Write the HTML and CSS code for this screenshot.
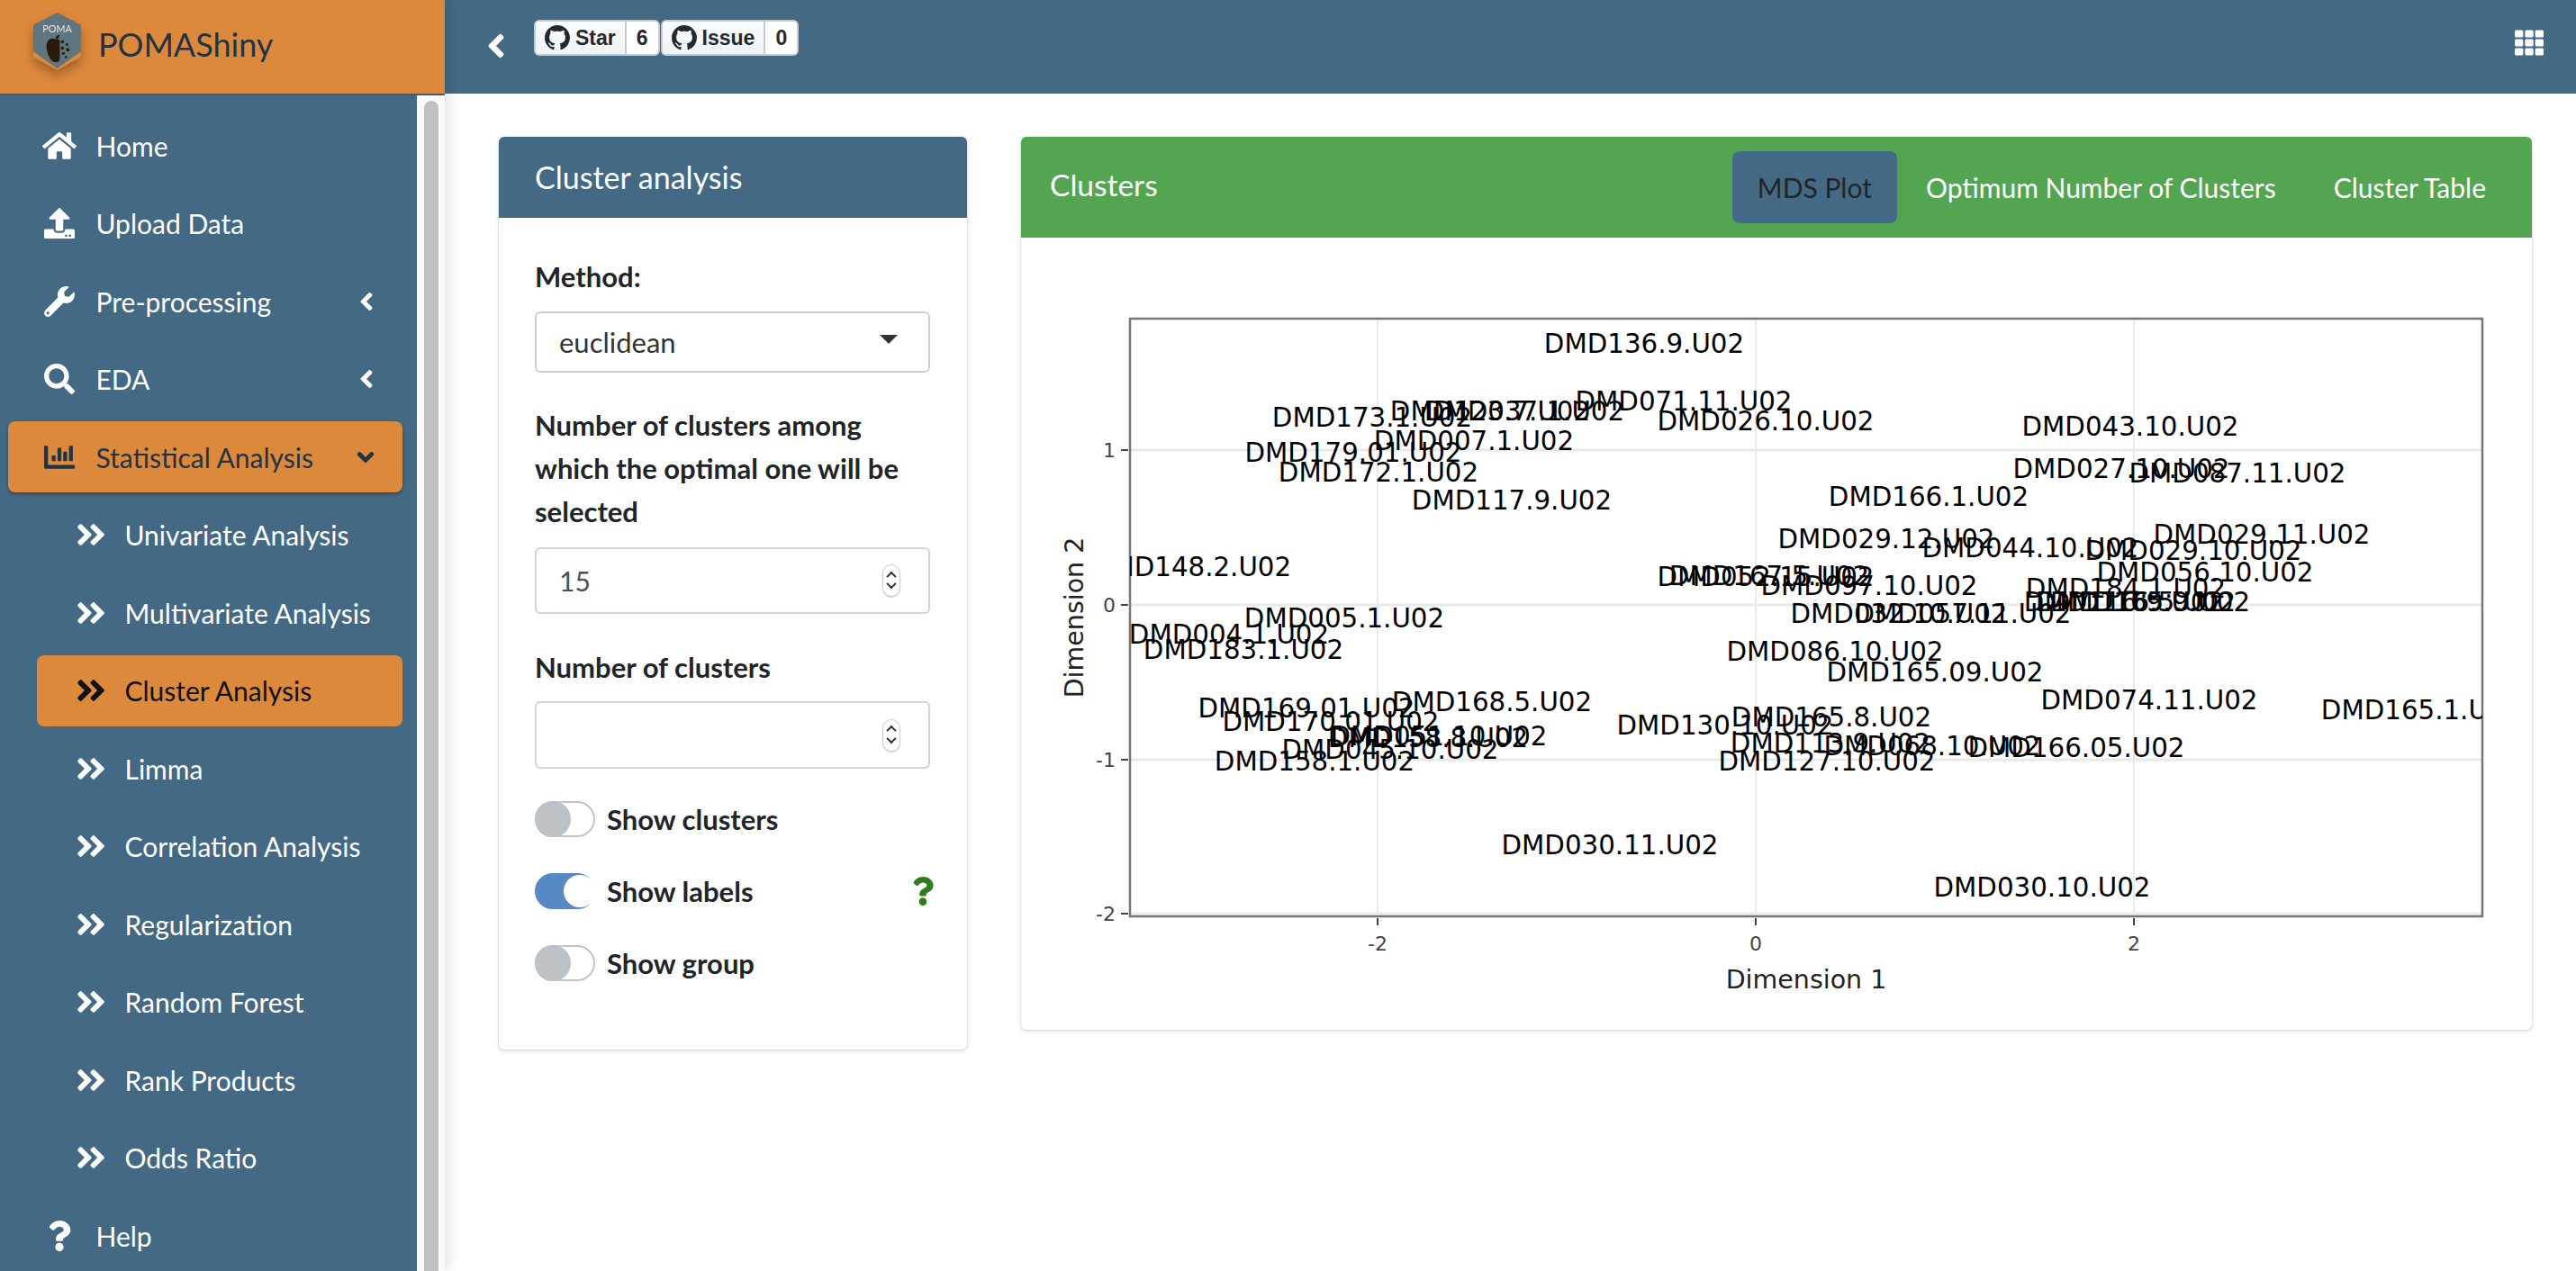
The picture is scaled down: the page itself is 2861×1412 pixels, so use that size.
FILE: index.html
```html
<!DOCTYPE html>
<html lang="en">
<head>
    <meta charset="UTF-8">
    <title>POMAShiny</title>
    <link rel="stylesheet" href="styles.css">
</head>
<body>
    <svg class="icon-defs" aria-hidden="true">
        <symbol id="i-home" viewBox="0 0 576 512"><path d="M280.37 148.26L96 300.11V464a16 16 0 0 0 16 16l112.06-.29a16 16 0 0 0 15.92-16V368a16 16 0 0 1 16-16h64a16 16 0 0 1 16 16v95.64a16 16 0 0 0 16 16.05L464 480a16 16 0 0 0 16-16V300L295.67 148.26a12.19 12.19 0 0 0-15.3 0zM571.6 251.47L488 182.56V44.05a12 12 0 0 0-12-12h-56a12 12 0 0 0-12 12v72.61L318.47 43a48 48 0 0 0-61 0L4.34 251.47a12 12 0 0 0-1.6 16.9l25.5 31A12 12 0 0 0 45.15 301l235.22-193.74a12.19 12.19 0 0 1 15.3 0L530.9 301a12 12 0 0 0 16.9-1.6l25.5-31a12 12 0 0 0-1.7-16.93z"/></symbol>
        <symbol id="i-upload" viewBox="0 0 512 512"><path d="M296 384h-80c-13.3 0-24-10.7-24-24V192h-87.7c-17.8 0-26.7-21.5-14.1-34.1L242.3 5.7c7.5-7.5 19.8-7.5 27.3 0l152.2 152.2c12.6 12.6 3.7 34.1-14.1 34.1H320v168c0 13.3-10.7 24-24 24zm216-8v112c0 13.3-10.7 24-24 24H24c-13.3 0-24-10.7-24-24V376c0-13.3 10.7-24 24-24h136v8c0 30.9 25.1 56 56 56h80c30.9 0 56-25.1 56-56v-8h136c13.3 0 24 10.7 24 24zm-124 88c0-11-9-20-20-20s-20 9-20 20 9 20 20 20 20-9 20-20zm64 0c0-11-9-20-20-20s-20 9-20 20 9 20 20 20 20-9 20-20z"/></symbol>
        <symbol id="i-wrench" viewBox="0 0 512 512"><path d="M507.73 109.1c-2.24-9.03-13.54-12.09-20.12-5.51l-74.36 74.36-67.88-11.31-11.31-67.88 74.36-74.36c6.62-6.62 3.43-17.9-5.66-20.16-47.38-11.74-99.55.91-136.58 37.93-39.64 39.64-50.55 97.1-34.05 147.2L18.74 402.76c-24.99 24.99-24.99 65.51 0 90.5 24.99 24.99 65.51 24.99 90.5 0l213.21-213.21c50.12 16.71 107.47 5.68 147.37-34.22 37.07-37.07 49.7-89.32 37.91-136.73zM64 472c-13.25 0-24-10.75-24-24 0-13.26 10.75-24 24-24s24 10.74 24 24c0 13.25-10.75 24-24 24z"/></symbol>
        <symbol id="i-search" viewBox="0 0 512 512"><path d="M505 442.7L405.3 343c-4.5-4.5-10.6-7-17-7H372c27.6-35.3 44-79.7 44-128C416 93.1 322.9 0 208 0S0 93.1 0 208s93.1 208 208 208c48.3 0 92.7-16.4 128-44v16.3c0 6.4 2.5 12.5 7 17l99.7 99.7c9.4 9.4 24.6 9.4 33.9 0l28.3-28.3c9.4-9.4 9.4-24.6.1-34zM208 336c-70.7 0-128-57.2-128-128 0-70.7 57.2-128 128-128 70.7 0 128 57.2 128 128 0 70.7-57.2 128-128 128z"/></symbol>
        <symbol id="i-chart" viewBox="0 0 512 512"><path d="M332.8 320h38.4c6.4 0 12.8-6.4 12.8-12.8V172.8c0-6.4-6.4-12.8-12.8-12.8h-38.4c-6.4 0-12.8 6.4-12.8 12.8v134.4c0 6.4 6.4 12.8 12.8 12.8zm96 0h38.4c6.4 0 12.8-6.4 12.8-12.8V76.8c0-6.4-6.4-12.8-12.8-12.8h-38.4c-6.4 0-12.8 6.4-12.8 12.8v230.4c0 6.4 6.4 12.8 12.8 12.8zm-288 0h38.4c6.4 0 12.8-6.4 12.8-12.8v-70.4c0-6.4-6.4-12.8-12.8-12.8h-38.4c-6.4 0-12.8 6.4-12.8 12.8v70.4c0 6.4 6.4 12.8 12.8 12.8zm96 0h38.4c6.4 0 12.8-6.4 12.8-12.8V108.8c0-6.4-6.4-12.8-12.8-12.8h-38.4c-6.4 0-12.8 6.4-12.8 12.8v198.4c0 6.4 6.4 12.8 12.8 12.8zM496 384H64V80c0-8.84-7.16-16-16-16H16C7.16 64 0 71.16 0 80v336c0 17.67 14.33 32 32 32h464c8.84 0 16-7.16 16-16v-32c0-8.84-7.16-16-16-16z"/></symbol>
        <symbol id="i-double" viewBox="0 0 448 512"><path d="M224.3 273l-136 136c-9.4 9.4-24.6 9.4-33.9 0l-22.6-22.6c-9.4-9.4-9.4-24.6 0-33.9l96.4-96.4-96.4-96.4c-9.4-9.4-9.4-24.6 0-33.9L54.3 103c9.4-9.4 24.6-9.4 33.9 0l136 136c9.5 9.4 9.5 24.6.1 34zm192-34l-136-136c-9.4-9.4-24.6-9.4-33.9 0l-22.6 22.6c-9.4 9.4-9.4 24.6 0 33.9l96.4 96.4-96.4 96.4c-9.4 9.4-9.4 24.6 0 33.9l22.6 22.6c9.4 9.4 24.6 9.4 33.9 0l136-136c9.4-9.2 9.4-24.4 0-33.8z"/></symbol>
        <symbol id="i-left" viewBox="0 0 256 512"><path d="M31.7 239l136-136c9.4-9.4 24.6-9.4 33.9 0l22.6 22.6c9.4 9.4 9.4 24.6 0 33.9L127.9 256l96.4 96.4c9.4 9.4 9.4 24.6 0 33.9L201.7 409c-9.4 9.4-24.6 9.4-33.9 0l-136-136c-9.5-9.4-9.5-24.6-.1-34z"/></symbol>
        <symbol id="i-down" viewBox="0 0 320 512"><path d="M143 352.3L7 216.3c-9.4-9.4-9.4-24.6 0-33.9l22.6-22.6c9.4-9.4 24.6-9.4 33.9 0l96.4 96.4 96.4-96.4c9.4-9.4 24.6-9.4 33.9 0l22.6 22.6c9.4 9.4 9.4 24.6 0 33.9l-136 136c-9.2 9.4-24.4 9.4-33.8 0z"/></symbol>
        <symbol id="i-question" viewBox="0 0 384 512"><path d="M202.021 0C122.202 0 70.503 32.703 29.914 91.026c-7.363 10.58-5.093 25.086 5.178 32.874l43.138 32.709c10.373 7.865 25.132 6.026 33.253-4.148 25.049-31.381 43.63-49.449 82.757-49.449 30.764 0 68.816 19.799 68.816 49.631 0 22.552-18.617 34.134-48.993 51.164-35.423 19.86-82.299 44.576-82.299 106.405V320c0 13.255 10.745 24 24 24h72.471c13.255 0 24-10.745 24-24v-5.773c0-42.86 125.268-44.645 125.268-160.627C377.504 66.256 286.902 0 202.021 0zM192 373.459c-38.196 0-69.271 31.075-69.271 69.271 0 38.195 31.075 69.27 69.271 69.27s69.271-31.075 69.271-69.271-31.075-69.27-69.271-69.27z"/></symbol>
        <symbol id="i-th" viewBox="0 32 512 448"><path d="M149.333 56v80c0 13.255-10.745 24-24 24H24c-13.255 0-24-10.745-24-24V56c0-13.255 10.745-24 24-24h101.333c13.255 0 24 10.745 24 24zm181.334 240v-80c0-13.255-10.745-24-24-24H205.333c-13.255 0-24 10.745-24 24v80c0 13.255 10.745 24 24 24h101.333c13.256 0 24.001-10.745 24.001-24zm32-240v80c0 13.255 10.745 24 24 24H488c13.255 0 24-10.745 24-24V56c0-13.255-10.745-24-24-24H386.667c-13.255 0-24 10.745-24 24zm-32 80V56c0-13.255-10.745-24-24-24H205.333c-13.255 0-24 10.745-24 24v80c0 13.255 10.745 24 24 24h101.333c13.256 0 24.001-10.745 24.001-24zm-205.334 56H24c-13.255 0-24 10.745-24 24v80c0 13.255 10.745 24 24 24h101.333c13.255 0 24-10.745 24-24v-80c0-13.255-10.745-24-24-24zM0 376v80c0 13.255 10.745 24 24 24h101.333c13.255 0 24-10.745 24-24v-80c0-13.255-10.745-24-24-24H24c-13.255 0-24 10.745-24 24zm386.667-56H488c13.255 0 24-10.745 24-24v-80c0-13.255-10.745-24-24-24H386.667c-13.255 0-24 10.745-24 24v80c0 13.255 10.745 24 24 24zm0 160H488c13.255 0 24-10.745 24-24v-80c0-13.255-10.745-24-24-24H386.667c-13.255 0-24 10.745-24 24v80c0 13.255 10.745 24 24 24zM181.333 376v80c0 13.255 10.745 24 24 24h101.333c13.255 0 24-10.745 24-24v-80c0-13.255-10.745-24-24-24H205.333c-13.255 0-24 10.745-24 24z"/></symbol>
        <symbol id="i-github" viewBox="0 0 16 16"><path d="M8 0C3.58 0 0 3.58 0 8c0 3.54 2.29 6.53 5.47 7.59.4.07.55-.17.55-.38 0-.19-.01-.82-.01-1.49-2.01.37-2.53-.49-2.69-.94-.09-.23-.48-.94-.82-1.13-.28-.15-.68-.52-.01-.53.63-.01 1.08.58 1.23.82.72 1.21 1.87.87 2.33.66.07-.52.28-.87.51-1.07-1.78-.2-3.64-.89-3.64-3.95 0-.87.31-1.59.82-2.15-.08-.2-.36-1.02.08-2.12 0 0 .67-.21 2.2.82.64-.18 1.32-.27 2-.27.68 0 1.36.09 2 .27 1.53-1.04 2.2-.82 2.2-.82.44 1.1.16 1.92.08 2.12.51.56.82 1.27.82 2.15 0 3.07-1.87 3.75-3.65 3.95.29.25.54.73.54 1.48 0 1.07-.01 1.93-.01 2.2 0 .21.15.46.55.38A8.013 8.013 0 0016 8c0-4.42-3.58-8-8-8z"/></symbol>
    </svg>

    <div class="wrapper">
        <aside class="sidebar">
            <div class="brand">
                <svg class="brand-logo" viewBox="0 0 56 66">
                    <polygon points="28,1 55,15 55,50 28,65 1,50 1,15" fill="#dd893b"/>
                    <polygon points="28,0 55,14 55,44 28,63 1,44 1,14" fill="#5f7680"/>
                    <text x="28" y="22" text-anchor="middle" class="logo-text">POMA</text>
                    <path d="M26 30c-6-3-11 2-10 10 1 9 6 16 10 16 3 0 5-1 5-4v-20c0-2-3-2-5-2z" fill="#2b1a0c"/>
                    <path d="M26 30c0-3 2-5 5-5-1 3-2 5-5 5z" fill="#2b1a0c"/>
                    <g fill="#2b1a0c">
                        <circle cx="34" cy="33" r="1.8"/><circle cx="39" cy="36" r="1.5"/><circle cx="34" cy="40" r="1.8"/>
                        <circle cx="40" cy="42" r="2"/><circle cx="35" cy="46" r="1.6"/><circle cx="38" cy="50" r="1.3"/>
                    </g>
                </svg>
                <span class="brand-name">POMAShiny</span>
            </div>
            <div class="sidebar-body">
                <nav class="nav">
                    <a class="nav-item"><svg class="nav-icon"><use href="#i-home"/></svg>Home</a>
                    <a class="nav-item"><svg class="nav-icon"><use href="#i-upload"/></svg>Upload Data</a>
                    <a class="nav-item"><svg class="nav-icon"><use href="#i-wrench"/></svg>Pre-processing<svg class="nav-caret"><use href="#i-left"/></svg></a>
                    <a class="nav-item"><svg class="nav-icon"><use href="#i-search"/></svg>EDA<svg class="nav-caret"><use href="#i-left"/></svg></a>
                    <a class="nav-item open"><svg class="nav-icon"><use href="#i-chart"/></svg>Statistical Analysis<svg class="nav-caret down"><use href="#i-down"/></svg></a>
                    <a class="nav-item sub"><svg class="nav-icon"><use href="#i-double"/></svg>Univariate Analysis</a>
                    <a class="nav-item sub"><svg class="nav-icon"><use href="#i-double"/></svg>Multivariate Analysis</a>
                    <a class="nav-item sub active"><svg class="nav-icon"><use href="#i-double"/></svg>Cluster Analysis</a>
                    <a class="nav-item sub"><svg class="nav-icon"><use href="#i-double"/></svg>Limma</a>
                    <a class="nav-item sub"><svg class="nav-icon"><use href="#i-double"/></svg>Correlation Analysis</a>
                    <a class="nav-item sub"><svg class="nav-icon"><use href="#i-double"/></svg>Regularization</a>
                    <a class="nav-item sub"><svg class="nav-icon"><use href="#i-double"/></svg>Random Forest</a>
                    <a class="nav-item sub"><svg class="nav-icon"><use href="#i-double"/></svg>Rank Products</a>
                    <a class="nav-item sub"><svg class="nav-icon"><use href="#i-double"/></svg>Odds Ratio</a>
                    <a class="nav-item"><svg class="nav-icon"><use href="#i-question"/></svg>Help</a>
                </nav>
                <div class="scrollbar"><div class="scroll-thumb"></div></div>
            </div>
        </aside>

        <div class="main">
            <header class="topbar">
                <svg class="back"><use href="#i-left"/></svg>
                <div class="badge">
                    <span class="badge-label"><svg class="gh"><use href="#i-github"/></svg>Star</span>
                    <span class="badge-count">6</span>
                </div>
                <div class="badge">
                    <span class="badge-label"><svg class="gh"><use href="#i-github"/></svg>Issue</span>
                    <span class="badge-count">0</span>
                </div>
                <svg class="apps"><use href="#i-th"/></svg>
            </header>

            <div class="content">
                <section class="card side-card">
                    <h3 class="card-title">Cluster analysis</h3>
                    <div class="card-body">
                        <label class="field-label">Method:</label>
                        <div class="select-box"><span>euclidean</span><i class="select-arrow"></i></div>

                        <label class="field-label multi">Number of clusters among<br>which the optimal one will be<br>selected</label>
                        <div class="num-box"><span>15</span><span class="spin"><i class="up"></i><i class="dn"></i></span></div>

                        <label class="field-label after-input">Number of clusters</label>
                        <div class="num-box tall"><span></span><span class="spin"><i class="up"></i><i class="dn"></i></span></div>

                        <div class="switch-row first"><span class="switch"></span><b>Show clusters</b></div>
                        <div class="switch-row"><span class="switch on"></span><b>Show labels</b><svg class="help"><use href="#i-question"/></svg></div>
                        <div class="switch-row"><span class="switch"></span><b>Show group</b></div>
                    </div>
                </section>

                <section class="card plot-card">
                    <div class="plot-head">
                        <h3 class="plot-title">Clusters</h3>
                        <ul class="tabs">
                            <li class="tab active">MDS Plot</li>
                            <li class="tab">Optimum Number of Clusters</li>
                            <li class="tab">Cluster Table</li>
                        </ul>
                    </div>
                    <svg class="plot" viewBox="1134 264 1678 880">
                        <defs><clipPath id="plot-area"><rect x="1255" y="353" width="1502" height="665"/></clipPath></defs>
                        <g class="grid">
                            <line x1="1530" y1="353" x2="1530" y2="1018"/>
                            <line x1="1950" y1="353" x2="1950" y2="1018"/>
                            <line x1="2370" y1="353" x2="2370" y2="1018"/>
                            <line class="h" x1="1255" y1="500" x2="2757" y2="500"/>
                            <line class="h" x1="1255" y1="672" x2="2757" y2="672"/>
                            <line class="h" x1="1255" y1="844" x2="2757" y2="844"/>
                            <line class="h" x1="1255" y1="1015" x2="2757" y2="1015"/>
                        </g>
                        <rect class="frame" x="1255" y="354" width="1502" height="664"/>
                        <g class="ticks">
                            <line x1="1245" y1="500" x2="1253" y2="500"/>
                            <line x1="1245" y1="672" x2="1253" y2="672"/>
                            <line x1="1245" y1="844" x2="1253" y2="844"/>
                            <line x1="1245" y1="1015" x2="1253" y2="1015"/>
                            <line x1="1530" y1="1020" x2="1530" y2="1028"/>
                            <line x1="1950" y1="1020" x2="1950" y2="1028"/>
                            <line x1="2370" y1="1020" x2="2370" y2="1028"/>
                        </g>
                        <g class="tick-labels">
                            <text x="1239" y="508" text-anchor="end">1</text>
                            <text x="1239" y="680" text-anchor="end">0</text>
                            <text x="1239" y="852" text-anchor="end">-1</text>
                            <text x="1239" y="1023" text-anchor="end">-2</text>
                            <text x="1530" y="1056" text-anchor="middle">-2</text>
                            <text x="1950" y="1056" text-anchor="middle">0</text>
                            <text x="2370" y="1056" text-anchor="middle">2</text>
                        </g>
                        <text class="axis-title" x="2006" y="1098" text-anchor="middle">Dimension 1</text>
                        <text class="axis-title" transform="translate(1203 686) rotate(-90)" text-anchor="middle">Dimension 2</text>
                        <g class="labels" clip-path="url(#plot-area)" text-anchor="middle">
                            <text x="1826" y="391">DMD136.9.U02</text>
                            <text x="1870" y="455">DMD071.11.U02</text>
                            <text x="1655" y="466">DMD123.7.U02</text>
                            <text x="1693" y="466">DMD037.1.U02</text>
                            <text x="1524" y="473">DMD173.1.U02</text>
                            <text x="1961" y="477">DMD026.10.U02</text>
                            <text x="2366" y="483">DMD043.10.U02</text>
                            <text x="1637" y="499">DMD007.1.U02</text>
                            <text x="1503" y="512">DMD179.01.U02</text>
                            <text x="1531" y="534">DMD172.1.U02</text>
                            <text x="2356" y="530">DMD027.10.U02</text>
                            <text x="2485" y="535">DMD087.11.U02</text>
                            <text x="1679" y="565">DMD117.9.U02</text>
                            <text x="2142" y="561">DMD166.1.U02</text>
                            <text x="2512" y="603">DMD029.11.U02</text>
                            <text x="2095" y="608">DMD029.12.U02</text>
                            <text x="2255" y="618">DMD044.10.U02</text>
                            <text x="2436" y="621">DMD029.10.U02</text>
                            <text x="1323" y="639">DMD148.2.U02</text>
                            <text x="2449" y="645">DMD056.10.U02</text>
                            <text x="1965" y="649">DMD167.5.U02</text>
                            <text x="1961" y="650">DMD052.15.U02</text>
                            <text x="2076" y="660">DMD097.10.U02</text>
                            <text x="2361" y="663">DMD184.1.U02</text>
                            <text x="2359" y="678">DMD116.9.U02</text>
                            <text x="2388" y="678">DMD165.9.U02</text>
                            <text x="2372" y="678">DMD116.5.U02</text>
                            <text x="2109" y="691">DMD032.10.U02</text>
                            <text x="2180" y="691">DMD057.11.U02</text>
                            <text x="1493" y="696">DMD005.1.U02</text>
                            <text x="1365" y="714">DMD004.1.U02</text>
                            <text x="1381" y="731">DMD183.1.U02</text>
                            <text x="2038" y="733">DMD086.10.U02</text>
                            <text x="2149" y="756">DMD165.09.U02</text>
                            <text x="2387" y="787">DMD074.11.U02</text>
                            <text x="1657" y="789">DMD168.5.U02</text>
                            <text x="1451" y="796">DMD169.01.U02</text>
                            <text x="2689" y="798">DMD165.1.U02</text>
                            <text x="2034" y="806">DMD165.8.U02</text>
                            <text x="1478" y="811">DMD170.01.U02</text>
                            <text x="1916" y="815">DMD130.10.U02</text>
                            <text x="1598" y="827">DMD051.10.U02</text>
                            <text x="1586" y="829">DMD158.8.U02</text>
                            <text x="1544" y="842">DMD045.10.U02</text>
                            <text x="2033" y="835">DMD113.9.U02</text>
                            <text x="2146" y="838">DMD068.10.U02</text>
                            <text x="2306" y="840">DMD166.05.U02</text>
                            <text x="1460" y="855">DMD158.1.U02</text>
                            <text x="2029" y="855">DMD127.10.U02</text>
                            <text x="1788" y="948">DMD030.11.U02</text>
                            <text x="2268" y="995">DMD030.10.U02</text>
                        </g>
                    </svg>
                </section>
            </div>
        </div>
    </div>
</body>
</html>
```

FILE: styles.css
```css
* {
    box-sizing: border-box;
}
body {
    margin: 0;
    background: white;
    font-family: Lato, "Noto Sans", sans-serif;
    color: #212529;
    overflow: hidden;
}
.icon-defs {
    display: none;
}
.wrapper {
    display: flex;
    height: 1412px;
    overflow: hidden;
}

/* sidebar */
.sidebar {
    width: 494px;
    flex-shrink: 0;
    display: flex;
    flex-direction: column;
    box-shadow: 4px 0 14px rgba(0,0,0,0.12);
    z-index: 2;
}
.brand {
    height: 106px;
    flex-shrink: 0;
    background: #dd893b;
    border-bottom: 2px solid #555;
    display: flex;
    align-items: center;
    padding-left: 36px;
    gap: 18px;
}
.brand-logo {
    width: 55px;
    height: 65px;
    margin-bottom: 12px;
    filter: drop-shadow(0 6px 6px rgba(0,0,0,0.3));
}
.logo-text {
    font-size: 11px;
    fill: #e6e6e6;
}
.brand-name {
    font-size: 36px;
    color: #1f3349;
    margin-bottom: 6px;
}
.sidebar-body {
    flex: 1;
    display: flex;
    min-height: 0;
}
.nav {
    width: 463px;
    background: #436984;
    padding-top: 16px;
    display: flex;
    flex-direction: column;
    gap: 7.5px;
}
.nav-item {
    height: 79px;
    flex-shrink: 0;
    margin: 0 16px 0 9px;
    padding-left: 38px;
    display: flex;
    align-items: center;
    border-radius: 8px;
    color: white;
    fill: white;
    font-size: 30px;
}
.nav-item.sub {
    margin-left: 41px;
    padding-left: 43px;
}
.nav-item.open {
    background: #dd893b;
    color: #1f3349;
    fill: #1f3349;
    box-shadow: 0 2px 4px rgba(0,0,0,0.3);
}
.nav-item.active {
    background: #dd893b;
    color: #111;
    fill: #111;
}
.nav-icon {
    width: 38px;
    height: 34px;
    margin-right: 21.5px;
    flex-shrink: 0;
}
.nav-item.sub .nav-icon {
    width: 34px;
    height: 38px;
    margin-right: 20.5px;
}
.nav-caret {
    width: 18px;
    height: 32px;
    margin-left: auto;
    margin-right: 31px;
}
.nav-caret.down {
    width: 20px;
    height: 30px;
    margin-right: 31px;
}
.scrollbar {
    flex: 1;
    background: #fafafa;
    padding: 6px 7px 0 8px;
}
.scroll-thumb {
    height: 100%;
    background: #c1c1c1;
    border-radius: 8px 8px 0 0;
}

/* top bar */
.main {
    flex: 1;
    min-width: 0;
}
.topbar {
    height: 104px;
    background: #436984;
    display: flex;
    align-items: flex-start;
    padding: 22px 36px 0 46px;
}
.back {
    width: 22px;
    height: 42px;
    margin: 8px 31px 0 0;
    fill: white;
}
.badge {
    height: 40px;
    display: flex;
    border: 2px solid #c6cbd1;
    border-radius: 6px;
    background: white;
    font-family: "Liberation Sans", sans-serif;
    font-size: 23px;
    font-weight: 700;
    color: #24292e;
    overflow: hidden;
    margin-right: 1px;
}
.badge-label {
    display: flex;
    align-items: center;
    gap: 6px;
    padding: 0 10px;
    background: linear-gradient(#fafbfc, #eff3f6);
    border-right: 2px solid #c6cbd1;
}
.badge-count {
    display: flex;
    align-items: center;
    padding: 0 11px;
}
.gh {
    width: 28px;
    height: 28px;
    fill: #24292e;
}
.apps {
    width: 32px;
    height: 29px;
    fill: white;
    margin: 11px 0 0 auto;
}

/* content */
.content {
    display: flex;
    align-items: flex-start;
    gap: 60px;
    padding: 48px 49px 0 60px;
}
.card {
    background: white;
    border-radius: 6px;
    box-shadow: 0 0 2px rgba(0,0,0,0.2), 0 2px 5px rgba(0,0,0,0.12);
    overflow: hidden;
}
.side-card {
    width: 520px;
    height: 1014px;
    flex-shrink: 0;
}
.card-title {
    margin: 0;
    height: 90px;
    line-height: 90px;
    padding-left: 40px;
    background: #436984;
    color: white;
    font-size: 34px;
    font-weight: 400;
}
.card-body {
    padding: 48px 41px 0 40px;
}
.field-label {
    display: block;
    font-size: 31px;
    font-weight: 700;
    line-height: 34px;
}
.field-label.multi {
    line-height: 48px;
    margin-top: 34px;
    margin-bottom: 16px;
}
.field-label.after-input {
    margin-top: 42px;
}
.select-box {
    margin-top: 22px;
    height: 68px;
    border: 2px solid #c9ccd0;
    border-radius: 6px;
    display: flex;
    align-items: center;
    justify-content: space-between;
    padding: 0 34px 0 25px;
    font-size: 31px;
    color: #333;
}
.select-arrow {
    width: 0;
    height: 0;
    border-left: 10px solid transparent;
    border-right: 10px solid transparent;
    border-top: 10px solid #333;
    margin-bottom: 6px;
}
.num-box {
    height: 74px;
    border: 2px solid #ced4da;
    border-radius: 6px;
    display: flex;
    align-items: center;
    justify-content: space-between;
    padding: 0 31px 0 25px;
    font-size: 30px;
    color: #495057;
}
.num-box.tall {
    height: 75px;
    margin-top: 21px;
}
.spin {
    width: 20px;
    height: 36px;
    border: 1px solid #ccc;
    border-radius: 10px;
    box-shadow: 0 1px 1px rgba(0,0,0,0.2);
    display: flex;
    flex-direction: column;
    align-items: center;
    justify-content: space-around;
    padding: 5px 0 6px;
}
.spin i {
    width: 8px;
    height: 8px;
    border-left: 2px solid #333;
    border-top: 2px solid #333;
}
.spin .up {
    transform: rotate(45deg) translate(1px, 1px);
}
.spin .dn {
    transform: rotate(225deg) translate(1px, 1px);
}
.switch-row {
    display: flex;
    align-items: center;
    gap: 13px;
    height: 40px;
    margin-top: 40px;
    font-size: 31px;
}
.switch-row.first {
    margin-top: 36px;
}
.switch {
    width: 67px;
    height: 40px;
    border: 2px solid #bfc4c8;
    border-radius: 20px;
    position: relative;
    display: inline-block;
    flex-shrink: 0;
}
.switch::before {
    content: "";
    position: absolute;
    left: -2px;
    top: -2px;
    width: 40px;
    height: 40px;
    border-radius: 50%;
    background: #bcc2c6;
}
.switch.on {
    background: #5789c4;
    border-color: #5789c4;
}
.switch.on::before {
    left: 30px;
    top: 0;
    width: 36px;
    height: 36px;
    background: white;
}
.help {
    width: 24px;
    height: 32px;
    fill: #2e7d1a;
    margin-left: auto;
    margin-right: -4px;
}

/* plot card */
.plot-card {
    width: 1678px;
    height: 992px;
    flex-shrink: 0;
}
.plot-head {
    height: 112px;
    background: #54a552;
    display: flex;
    align-items: center;
    justify-content: space-between;
    padding: 0 19px 0 32px;
}
.plot-title {
    margin: 0 0 6px;
    color: white;
    font-size: 33.5px;
    font-weight: 400;
}
.tabs {
    list-style: none;
    display: flex;
    margin: 0;
    padding: 0;
}
.tab {
    height: 80px;
    line-height: 80px;
    padding: 0 32px;
    color: white;
    font-size: 30px;
    border-radius: 8px;
}
.tab.active {
    background: #436984;
    color: #212529;
    padding: 0 28px;
}
.plot {
    display: block;
    width: 1678px;
    height: 880px;
}
.grid line {
    stroke: #eaeaea;
    stroke-width: 2px;
}
.grid line.h {
    stroke-width: 3px;
}
.frame {
    fill: none;
    stroke: #777;
    stroke-width: 2.5px;
}
.ticks line {
    stroke: #444;
    stroke-width: 2px;
}
.tick-labels text {
    font-family: "DejaVu Sans", sans-serif;
    font-size: 22px;
    fill: #444;
}
.axis-title {
    font-family: "DejaVu Sans", sans-serif;
    font-size: 28.5px;
    fill: #222;
}
.labels text {
    font-family: "DejaVu Sans", sans-serif;
    font-size: 29.3px;
    fill: #000;
    transform: translateY(1px);
}
```
